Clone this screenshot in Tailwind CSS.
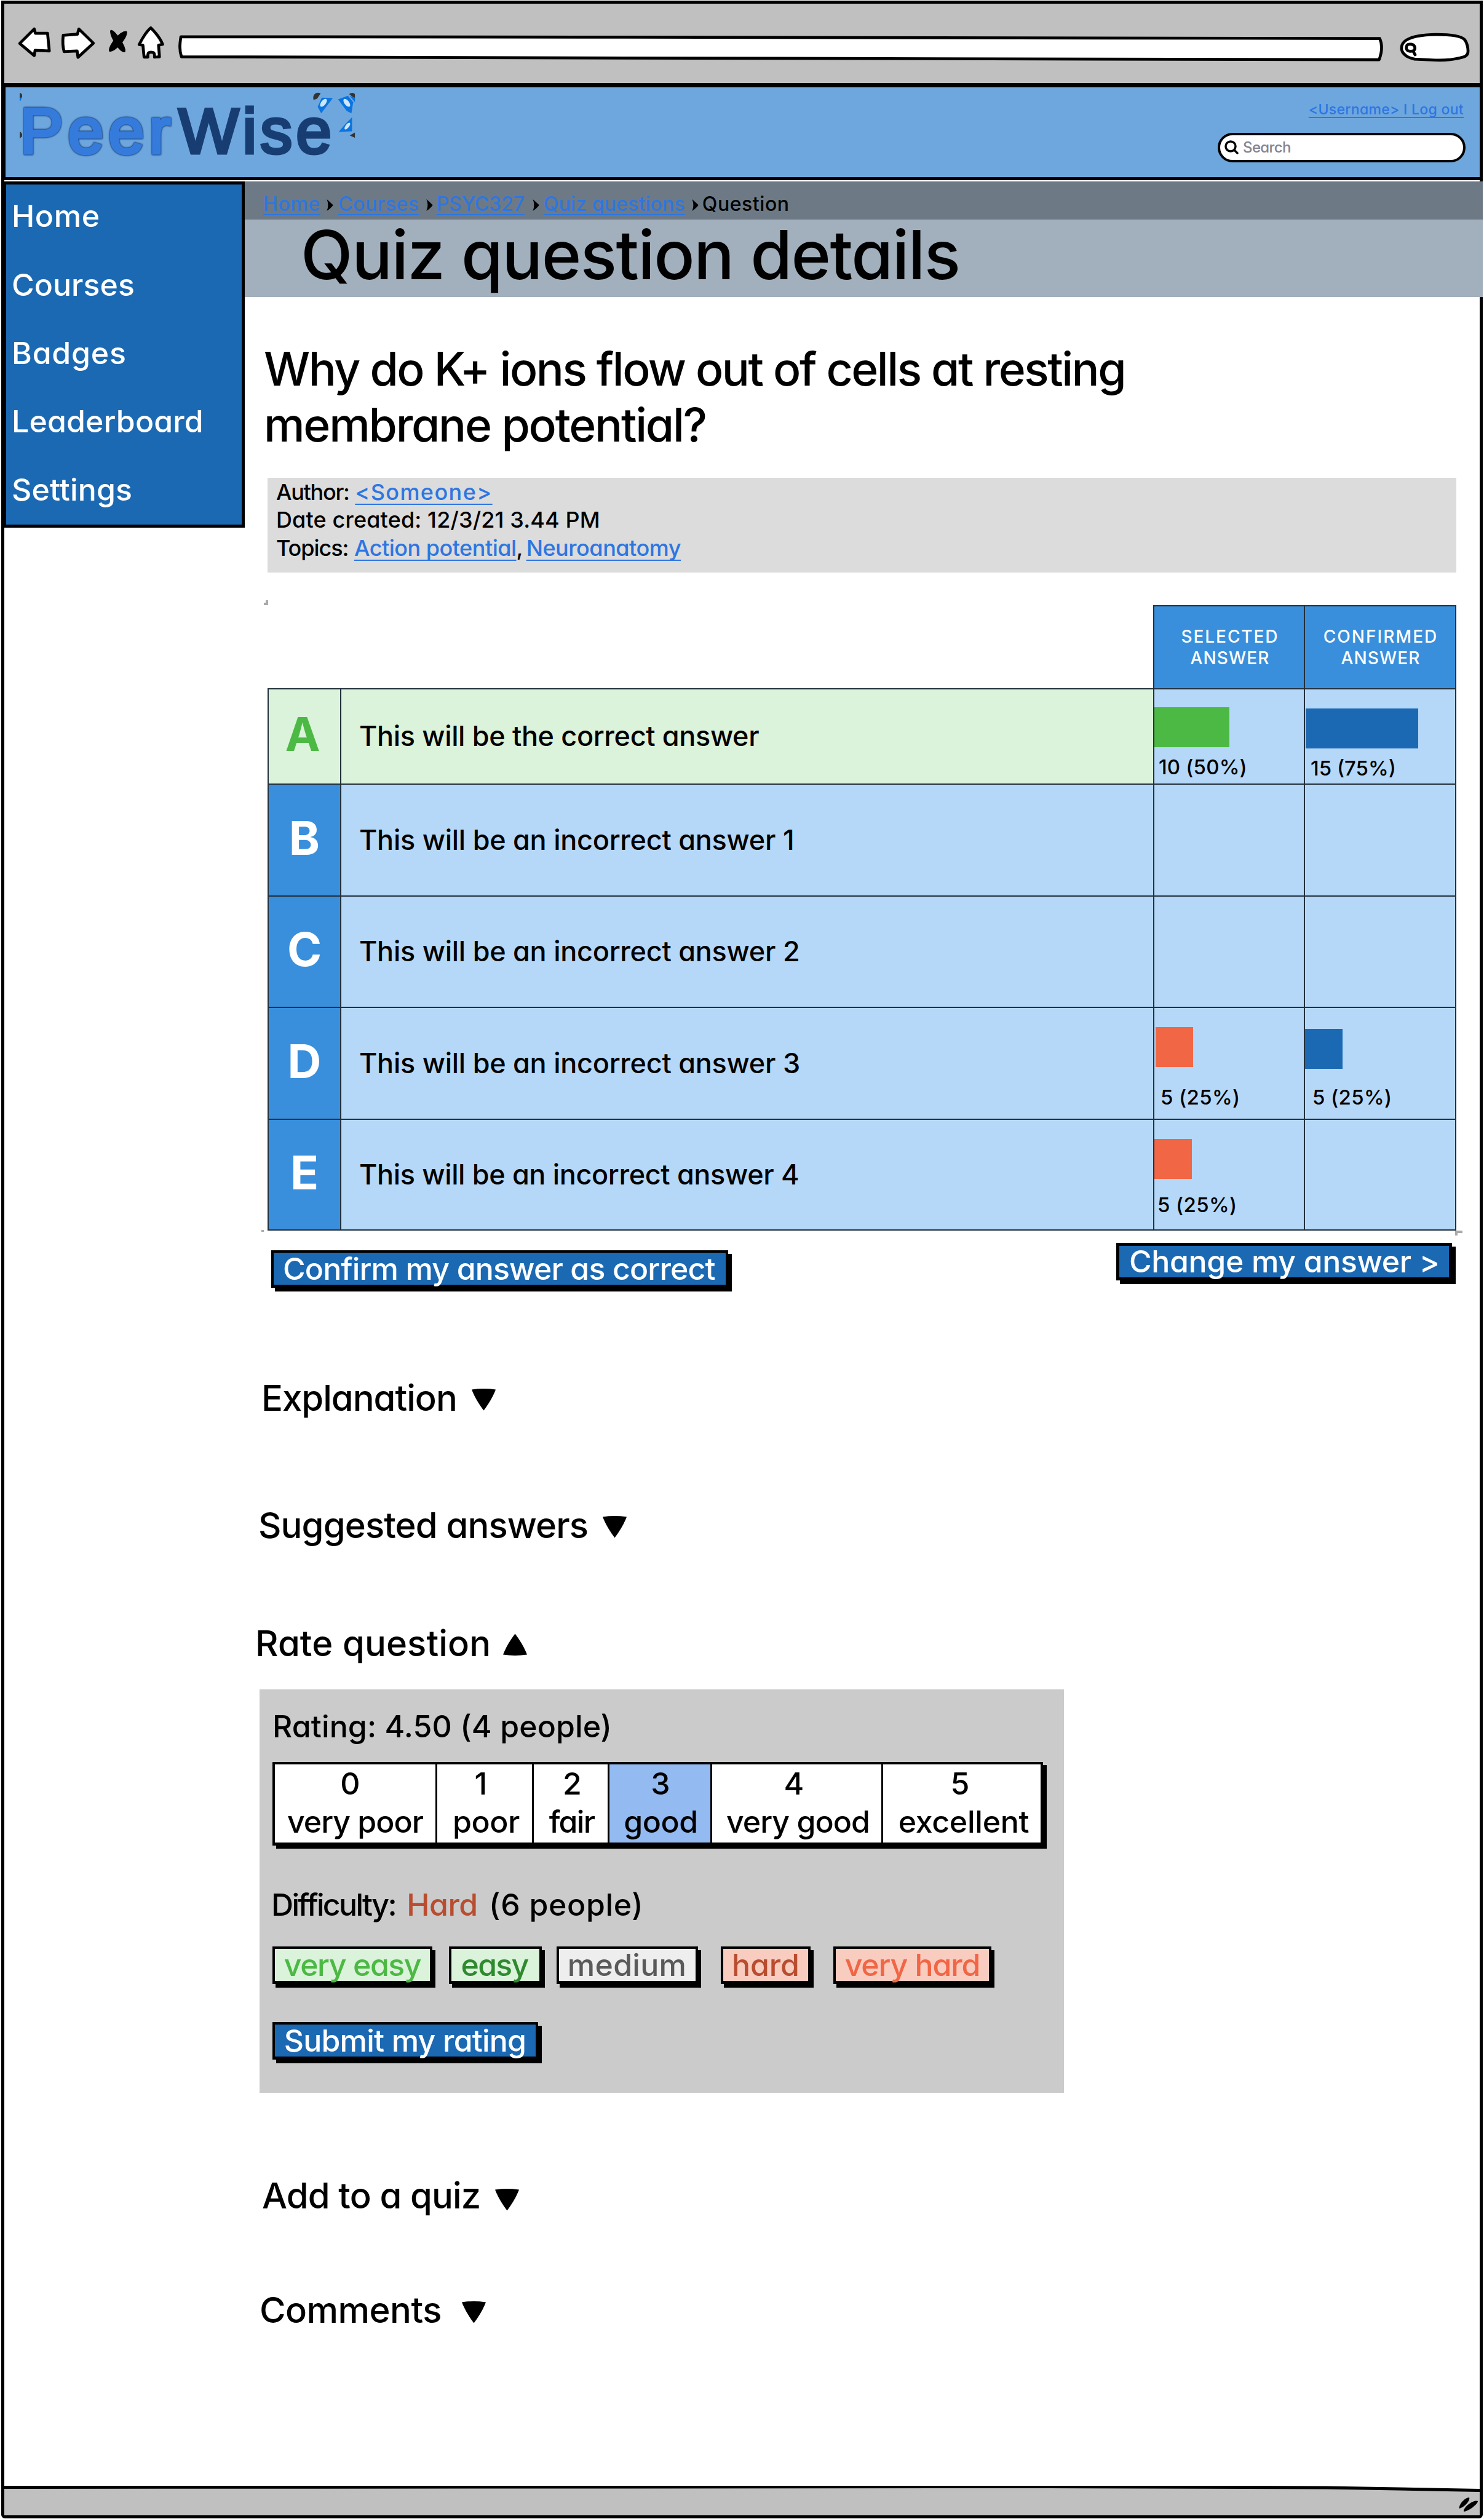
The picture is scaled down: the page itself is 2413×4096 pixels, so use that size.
<!DOCTYPE html>
<html lang="en">
<head>
<meta charset="utf-8">
<title>PeerWise - Quiz question details</title>
<script src="https://cdn.jsdelivr.net/npm/@tailwindcss/browser@4"></script>
</head>
<body class="w-[2413px] h-[4096px] overflow-hidden bg-white pl-[2px] pt-px font-['Inter',sans-serif] font-medium text-black [font-feature-settings:'cv11'] whitespace-nowrap">
<div class="flex flex-col w-[2409px] h-[4094px] border-[5px] border-black rounded-b-md">

  <!-- Browser toolbar -->
  <div class="shrink-0 h-[136px] bg-[#c0c0c0] border-b-[7px] border-black">
    <svg class="block w-[2399px] h-[129px]" viewBox="7.4 6.4 2545 136.9" preserveAspectRatio="none" fill="#fff" stroke="#000" stroke-width="5" stroke-linejoin="round" stroke-linecap="round">
      <path d="M34 75 59 50 61 57.5 82 57.5 85 88 60.5 87 59 96Z"/>
      <path d="M109 61 133.500 59 136 50 161 74.500 134.500 99 133 88 110.500 89C108 80 108 70 109 61Z"/>
      <path d="M260 48C266 54 276 65 280.500 76.500L273.500 78 275 98 266.500 98.500C267 90 264 90 260.500 90 257 90 254.500 90 255 98.500L248.500 98.500 246.500 78 240 77C246 65 254 53 260 48Z"/>
      <path d="M192 54C198 56 215 80 214 88 208 88 193 66 192 54ZM217 56C216 68 196 88 190 87 190 78 208 56 217 56Z" fill="#000" stroke-width="4.500"/>
      <path d="M312 63.500 1000 64 2380 66.500C2386 80 2382 95 2379 103L1200 100.500 313 98C309 86 310 76 312 63.500Z"/>
      <path d="M2440 102C2424 99 2417.500 90 2417.500 83 2417.500 66 2442 60 2478 59.500 2500 59.500 2520 62 2526 68 2531 74 2533 85 2532 91 2531 97 2526 98 2518 100 2502 104 2488 104.500 2470 103.500Z"/>
      <path d="M2427 78C2430 75 2438 76 2440 80 2442 86 2439 89 2432 88.500 2425 88 2425 82 2427 78ZM2438 89 2441 94.500"/>
    </svg>
  </div>

  <!-- Site header -->
  <header class="shrink-0 h-[151px] bg-[#6ea7dd] border-b-[5px] border-l-2 border-black flex justify-between">
    <div class="flex pl-[23px]">
      <svg class="w-[6px] h-[90px] mt-[6px]" viewBox="0 0 6 90"><path d="M0 3Q5 4 4 10L0 16Z" fill="#333"/><path d="M0 12 4 9 1 17Z" fill="#0a74e0"/><path d="M0 66Q5 68 4 74L0 77Z" fill="#333"/></svg>
      <div class="-ml-[5px] flex text-[104px] leading-[142px] h-[128px] font-normal font-['Liberation_Sans',sans-serif] [stroke-linejoin:round]">
        <span class="tracking-[.078em] text-[#357bdc] [-webkit-text-stroke:5px_#357bdc] [filter:drop-shadow(0_0_1px_#1a3f78)_drop-shadow(0_0_1px_#1a3f78)]">Peer</span>
        <span class="ml-[5px] tracking-[.057em] text-[#173d73] [-webkit-text-stroke:5px_#173d73]">Wise</span>
      </div>
      <svg class="-ml-[36px] mt-[8px] w-[70px] h-[76px]" viewBox="540 159 74 80">
        <path d="M541 172C538 163 546 157 553 161L547 170Z" fill="#333"/><path d="M555 168 574 169 554 195 548 184Z" fill="#0a74e0"/><ellipse cx="558" cy="177" rx="4" ry="8" transform="rotate(38 558 177)" fill="#cfe6fb"/>
        <path d="M602 162Q608 158 612 162V170Z" fill="#333"/><path d="M583 171 600 165 609 176 606 195 598 191Z" fill="#0a74e0"/><ellipse cx="598" cy="177" rx="4" ry="8" transform="rotate(-38 598 177)" fill="#cfe6fb"/><path d="M603 165 612 168V176Z" fill="#0a74e0"/>
        <path d="M607 202V226L584 227 596 213Z" fill="#0a74e0"/><ellipse cx="599" cy="217" rx="3" ry="7" transform="rotate(38 599 217)" fill="#cfe6fb"/><path d="M603 233 612 228V237Z" fill="#333"/>
      </svg>
    </div>
    <div class="flex flex-col items-end pr-[23px] pt-[21px]">
      <a class="text-[23px] leading-[30px] h-[30px] mr-[3px] tracking-[.013em] text-[#2d76e2] underline decoration-[1.500px] underline-offset-[4px] [text-decoration-skip-ink:none]">&lt;Username&gt; I Log out</a>
      <div class="mt-[23px] w-[403px] h-[48px] rounded-[24px] border-4 border-black bg-white flex items-center pl-[7px]">
        <svg class="w-[24px] h-[24px]" viewBox="0 0 24 24" fill="none" stroke="#000" stroke-width="3.500" stroke-linecap="round"><circle cx="10" cy="10" r="8"/><path d="M16 16 21 21"/></svg>
        <span class="ml-[6px] -mt-[1px] text-[24px] leading-[30px] tracking-[-.026em] text-[#85838f]">Search</span>
      </div>
    </div>
  </header>

  <div class="grow flex pt-[2px]">
    <!-- Navigation -->
    <aside class="shrink-0 w-[391px] h-[563px] bg-[#1b69b3] border-[5px] border-l-[3px] border-black text-white text-[50px] pl-[9px]">
      <nav class="-mt-[4px] flex flex-col">
        <a class="h-[111px] flex items-center tracking-[.012em]">Home</a>
        <a class="h-[112px] flex items-center tracking-[.001em]">Courses</a>
        <a class="h-[111px] flex items-center tracking-[.016em]">Badges</a>
        <a class="h-[111px] flex items-center tracking-[.003em]">Leaderboard</a>
        <a class="h-[111px] flex items-center tracking-[.003em]">Settings</a>
      </nav>
    </aside>

    <main class="grow flex flex-col items-start">
      <nav class="w-[2013px] h-[62px] bg-[#6d7a86] flex items-center pl-[30px] pt-[11px] text-[32px] leading-[40px]">
        <a class="tracking-[.020em] text-[#2d76e2] underline decoration-2 underline-offset-[5px] [text-decoration-skip-ink:none]">Home</a>
        <svg class="ml-[9px] mr-[8px] w-[12px] h-[19px] mt-[4px]" viewBox="0 0 12 20"><path d="M1 0C6 4 10 8 12 10 10 13 6 17 1 20 4 14 4 6 1 0Z"/></svg>
        <a class="tracking-[.018em] text-[#2d76e2] underline decoration-2 underline-offset-[5px] [text-decoration-skip-ink:none]">Courses</a>
        <svg class="ml-[10px] mr-[6px] w-[12px] h-[19px] mt-[4px]" viewBox="0 0 12 20"><path d="M1 0C6 4 10 8 12 10 10 13 6 17 1 20 4 14 4 6 1 0Z"/></svg>
        <a class="tracking-[-.003em] text-[#2d76e2] underline decoration-2 underline-offset-[5px] [text-decoration-skip-ink:none]">PSYC327</a>
        <svg class="ml-[12px] mr-[7px] w-[12px] h-[19px] mt-[4px]" viewBox="0 0 12 20"><path d="M1 0C6 4 10 8 12 10 10 13 6 17 1 20 4 14 4 6 1 0Z"/></svg>
        <a class="tracking-[.004em] text-[#2d76e2] underline decoration-2 underline-offset-[5px] [text-decoration-skip-ink:none]">Quiz questions</a>
        <svg class="ml-[10px] mr-[6px] w-[12px] h-[19px] mt-[4px]" viewBox="0 0 12 20"><path d="M1 0C6 4 10 8 12 10 10 13 6 17 1 20 4 14 4 6 1 0Z"/></svg>
        <span class="tracking-[.017em]">Question</span>
      </nav>
      <div class="w-[2013px] h-[126px] bg-[#a2afbc] flex items-center pb-[12px] pl-[91px]">
        <h1 class="text-[110px] leading-[100px] tracking-[-.015em]">Quiz question details</h1>
      </div>

      <h2 class="mt-[72px] ml-[31px] text-[75px] leading-[90.500px]">
        <span class="tracking-[-.033em]">Why do K+ ions flow out of cells at resting</span><br>
        <span class="tracking-[-.030em]">membrane potential?</span>
      </h2>

      <div class="mt-[41px] ml-[37px] w-[1933px] h-[154px] bg-[#dcdcdc] pl-[14px] pt-px text-[36px] leading-[45.250px]">
        <div><span class="tracking-[-.036em]">Author:</span> <a class="tracking-[.039em] text-[#2d76e2] underline decoration-2 underline-offset-[6px] [text-decoration-skip-ink:none]">&lt;Someone&gt;</a></div>
        <div class="tracking-[.004em]">Date created: 12/3/21 3.44 PM</div>
        <div><span class="tracking-[-.030em]">Topics:</span> <a class="tracking-[-.014em] text-[#2d76e2] underline decoration-2 underline-offset-[6px] [text-decoration-skip-ink:none]">Action potential</a>, <a class="-ml-[4px] tracking-[-.013em] text-[#2d76e2] underline decoration-2 underline-offset-[6px] [text-decoration-skip-ink:none]">Neuroanatomy</a></div>
      </div>

      <!-- Answer statistics -->
      <div class="mt-[45px] ml-[31px] w-[7px] h-[8px] border-r-4 border-b-4 border-[#aaa]"></div>
      <div class="ml-[1477px] w-[493px] h-[135px] bg-[#22303c] pt-[2px] px-[2px] grid grid-cols-[243px_244px] gap-[2px] text-white text-[28px] leading-[35px] text-center">
        <div class="bg-[#398fdc] pt-[32px] pl-[3px]"><span class="tracking-[.068em]">SELECTED</span><br><span class="tracking-[.040em]">ANSWER</span></div>
        <div class="bg-[#398fdc] pt-[32px] pl-[2px]"><span class="tracking-[.074em]">CONFIRMED</span><br><span class="tracking-[.040em]">ANSWER</span></div>
      </div>
      <div class="ml-[37px] w-[1933px] h-[882px] bg-[#22303c] p-[2px] grid grid-cols-[116px_1320px_243px_244px] grid-rows-[153px_180px_179px_180px_178px] gap-[2px] text-[45px]">
        <div class="bg-[#dbf2db] text-[#4cb944] text-[76px] font-bold flex items-center justify-center pb-[9px] pr-[6px]">A</div>
        <div class="bg-[#dbf2db] flex items-center pl-[29px] pb-[2px] tracking-[-.008em]">This will be the correct answer</div>
        <div class="bg-[#b6d8f8] pt-[29px] text-[33px] leading-[40px]"><div class="h-[65px] bg-[#4cb944]" style="width:50%"></div><div class="mt-[12px] pl-[7px] tracking-[.005em]">10 (50%)</div></div>
        <div class="bg-[#b6d8f8] pt-[31px] text-[33px] leading-[40px]"><div class="ml-px h-[65px] bg-[#1b69b3]" style="width:75%"></div><div class="mt-[12px] pl-[9px]">15 (75%)</div></div>

        <div class="bg-[#398fdc] text-white text-[76px] font-bold flex items-center justify-center pb-[9px]">B</div>
        <div class="bg-[#b6d8f8] flex items-center pl-[29px] pb-px tracking-[-.006em]">This will be an incorrect answer 1</div>
        <div class="bg-[#b6d8f8]"></div>
        <div class="bg-[#b6d8f8]"></div>

        <div class="bg-[#398fdc] text-white text-[76px] font-bold flex items-center justify-center pb-[9px]">C</div>
        <div class="bg-[#b6d8f8] flex items-center pl-[29px] pb-[2px] tracking-[-.006em]">This will be an incorrect answer 2</div>
        <div class="bg-[#b6d8f8]"></div>
        <div class="bg-[#b6d8f8]"></div>

        <div class="bg-[#398fdc] text-white text-[76px] font-bold flex items-center justify-center pb-[9px]">D</div>
        <div class="bg-[#b6d8f8] flex items-center pl-[29px] pb-px tracking-[-.006em]">This will be an incorrect answer 3</div>
        <div class="bg-[#b6d8f8] pt-[31px] text-[33px] leading-[40px]"><div class="ml-[2px] h-[65px] bg-[#f16645]" style="width:25%"></div><div class="mt-[29px] pl-[10px] tracking-[.011em]">5 (25%)</div></div>
        <div class="bg-[#b6d8f8] pt-[34px] text-[33px] leading-[40px]"><div class="h-[65px] bg-[#1b69b3]" style="width:25%"></div><div class="mt-[26px] pl-[12px] tracking-[.011em]">5 (25%)</div></div>

        <div class="bg-[#398fdc] text-white text-[76px] font-bold flex items-center justify-center pb-[9px]">E</div>
        <div class="bg-[#b6d8f8] flex items-center pl-[29px] pb-px tracking-[-.008em]">This will be an incorrect answer 4</div>
        <div class="bg-[#b6d8f8] pt-[31px] text-[33px] leading-[40px]"><div class="h-[65px] bg-[#f16645]" style="width:25%"></div><div class="mt-[22px] pl-[5px] tracking-[.011em]">5 (25%)</div></div>
        <div class="bg-[#b6d8f8]"></div>
      </div>
      <div class="ml-[27px] w-[1953px] h-[8px] flex justify-between"><div class="w-[4px] h-[3px] bg-[#aaa] -mt-px"></div><div class="w-[12px] h-[8px] border-l-4 border-t-4 border-[#aaa]"></div></div>

      <div class="mt-[12px] ml-[43px] w-[1920px] h-[80px] flex justify-between items-start text-white text-[50px]">
        <button class="mt-[12px] w-[743px] h-[61px] bg-[#1b69b3] border-4 border-b-[5px] border-black shadow-[6px_6px_0_#000] flex items-center pl-[15px] tracking-[-.017em]">Confirm my answer as correct</button>
        <button class="w-[546px] h-[61px] bg-[#1b69b3] border-[5px] border-black shadow-[6px_6px_0_#000] flex items-center pl-[16px] tracking-[-.007em]">Change my answer &gt;</button>
      </div>

      <div class="mt-[132px] ml-[27px] h-[80px] flex items-center text-[58px]"><span class="tracking-[-.017em]">Explanation</span><svg class="ml-[24px] mt-[4px] w-[39px] h-[37px]" viewBox="0 0 40 37"><path d="M0 2Q20-1 40 2L38 7Q32 21 20 37 8 21 2 7Z"/></svg></div>
      <div class="mt-[127px] ml-[22px] h-[80px] flex items-center text-[58px]"><span class="tracking-[-.015em]">Suggested answers</span><svg class="ml-[24px] mt-[4px] w-[39px] h-[37px]" viewBox="0 0 40 37"><path d="M0 2Q20-1 40 2L38 7Q32 21 20 37 8 21 2 7Z"/></svg></div>
      <div class="mt-[112px] ml-[17px] h-[80px] flex items-center text-[58px]"><span class="tracking-[.002em]">Rate question</span><svg class="ml-[20px] mt-[4px] w-[39px] h-[37px]" viewBox="0 0 40 37"><path d="M0 35Q20 38 40 35L38 30Q32 16 20 0 8 16 2 30Z"/></svg></div>

      <!-- Rating panel -->
      <section class="mt-[35px] ml-[24px] w-[1308px] h-[656px] bg-[#cbcbcb] pl-[21px] flex flex-col items-start text-[50px] leading-[60px]">
        <p class="mt-[30px] tracking-[.002em]">Rating: 4.50 (4 people)</p>
        <div class="mt-[28px] h-[136px] border-4 border-b-[5px] border-black shadow-[6px_5px_0_#000] bg-black grid grid-cols-[261px_154px_120px_164px_275px_256px] gap-[3px] text-center leading-[62px]">
          <div class="bg-white"><div class="pr-[16px]">0</div><div class="tracking-[-.020em]">very poor</div></div>
          <div class="bg-white"><div class="pr-[12px]">1</div><div class="pl-[5px] tracking-[-.009em]">poor</div></div>
          <div class="bg-white"><div class="pl-[5px]">2</div><div class="pl-[3px] tracking-[-.034em]">fair</div></div>
          <div class="bg-[#94baf2]"><div class="pl-[2px]">3</div><div class="pl-[3px] tracking-[-.009em]">good</div></div>
          <div class="bg-white"><div class="pr-[9px]">4</div><div class="pl-[4px] tracking-[-.019em]">very good</div></div>
          <div class="bg-white"><div class="pr-[6px]">5</div><div class="pl-[6px] tracking-[-.005em]">excellent</div></div>
        </div>
        <p class="mt-[66px] -ml-[2px]"><span class="tracking-[-.054em]">Difficulty:</span> <span class="mx-[5px] tracking-[-.010em] text-[#b94d2f]">Hard</span> <span class="tracking-[.014em]">(6 people)</span></p>
        <div class="mt-[38px] flex text-center">
          <button class="w-[260px] h-[61px] bg-[#dbf2db] border-4 border-b-[5px] border-black shadow-[5px_6px_0_#000] text-[#4cb944] flex items-center justify-center tracking-[-.029em]">very easy</button>
          <button class="ml-[27px] w-[151px] h-[61px] bg-[#dbf2db] border-4 border-b-[5px] border-black shadow-[5px_6px_0_#000] text-[#2f8a2f] flex items-center justify-center tracking-[-.035em] pr-[3px]">easy</button>
          <button class="ml-[24px] w-[230px] h-[61px] bg-[#eeeeee] border-4 border-b-[5px] border-black shadow-[5px_6px_0_#000] text-[#5a5a5a] flex items-center justify-center tracking-[.005em] pr-px">medium</button>
          <button class="ml-[37px] w-[146px] h-[61px] bg-[#f9ccc0] border-4 border-b-[5px] border-black shadow-[5px_6px_0_#000] text-[#b94d2f] flex items-center justify-center tracking-[-.002em]">hard</button>
          <button class="ml-[37px] w-[257px] h-[61px] bg-[#f9ccc0] border-4 border-b-[5px] border-black shadow-[5px_6px_0_#000] text-[#f16645] flex items-center justify-center tracking-[-.022em]">very hard</button>
        </div>
        <button class="mt-[62px] w-[432px] h-[61px] bg-[#1b69b3] border-4 border-b-[5px] border-black shadow-[6px_6px_0_#000] text-white flex items-center justify-center tracking-[-.016em] pr-px">Submit my rating</button>
      </section>

      <div class="mt-[127px] ml-[28px] h-[80px] flex items-center text-[58px]"><span class="tracking-[-.015em]">Add to a quiz</span><svg class="ml-[24px] mt-[12px] w-[39px] h-[37px]" viewBox="0 0 40 37"><path d="M0 2Q20-1 40 2L38 7Q32 21 20 37 8 21 2 7Z"/></svg></div>
      <div class="mt-[106px] ml-[24px] h-[80px] flex items-center text-[58px]"><span class="tracking-[-.009em]">Comments</span><svg class="ml-[33px] mt-[6px] w-[39px] h-[37px]" viewBox="0 0 40 37"><path d="M0 2Q20-1 40 2L38 7Q32 21 20 37 8 21 2 7Z"/></svg></div>
    </main>
  </div>

  <!-- Status bar -->
  <footer class="shrink-0 h-[48px]">
    <svg class="block w-[2399px] h-[48px]" viewBox="0 0 2399 48" preserveAspectRatio="none"><path d="M0 2.500 1700 1.500 2150 3 2399 8V48H0Z" fill="#c0c0c0"/><path d="M0 2.500 1700 1.500 2150 3 2399 7.500" fill="none" stroke="#000" stroke-width="5"/><path d="M2366 37C2364 31 2376 18 2382 19 2384 24 2374 35 2366 37ZM2373 42C2372 35 2389 22 2396 25 2396 30 2380 42 2373 42Z"/></svg>
  </footer>
</div>
</body>
</html>
